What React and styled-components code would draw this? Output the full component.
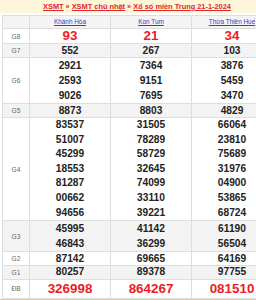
import styled, {createGlobalStyle} from "styled-components"

const GlobalStyle = createGlobalStyle`
	body {
		margin: 0;
		background: #fff;
		font-family: "Liberation Sans", Arial, sans-serif;
		overflow: hidden;
	}
`

const Viewport = styled.div`
	width: 100%;
	overflow: hidden;
`
const Page = styled.div`
	width: 274px;
`
const Breadcrumb = styled.div`
	height: 13px;
	background: #fdf6d8;
	text-align: center;
	font-size: 7.4px;
	font-weight: 700;
	line-height: 13px;
	color: #e3262d;
	white-space: nowrap;
`
const Crumb = styled.a`
	color: #e3262d;
	text-decoration: underline;
`
const Sep = styled.span`
	margin: 0 2px;
	color: #e3262d;
`
const Table = styled.table`
	width: 270px;
	margin: 2px 2px 0;
	border-collapse: collapse;
	table-layout: fixed;
	border: 1px solid #dedede;
`
const HeadRow = styled.tr`
	background: #f4f4f4;
`
const Province = styled.th`
	padding: 0;
	border: 1px solid #dedede;
	font-size: 6.4px;
	font-weight: 400;
	line-height: 12px;
	text-align: center;
`
const ProvinceLink = styled.a`
	color: #2f43c8;
	text-decoration: underline;
`
const Row = styled.tr`
	background: ${p => (p.$shade ? "#f3f3f3" : "#fff")};
`
const Label = styled.td`
	padding: 0;
	border: 1px solid #dedede;
	font-size: 6.6px;
	color: #666;
	text-align: center;
	vertical-align: middle;
`
const Cell = styled.td`
	padding: 0;
	border: 1px solid #dedede;
	text-align: center;
	vertical-align: middle;
`
const Num = styled.div`
	font-weight: 700;
	font-size: ${p => (p.$big ? "13.4px" : "10.2px")};
	line-height: ${p => p.$lh}px;
	color: ${p => (p.$big ? "#ec1c24" : "#222")};
`
const BottomLine = styled.div`
	height: 1px;
	border-top: 1px solid #f1c793;
	background: #fdf6d8;
`

const provinces = ["Khánh Hòa", "Kon Tum", "Thừa Thiên Huế"]

const prizes = [
	{name: "G8", lh: 14, big: true, values: [["93"], ["21"], ["34"]]},
	{name: "G7", lh: 13, values: [["552"], ["267"], ["103"]]},
	{
		name: "G6",
		lh: 15,
		values: [
			["2921", "2593", "9026"],
			["7364", "9151", "7695"],
			["3876", "5459", "3470"],
		],
	},
	{name: "G5", lh: 13, values: [["8873"], ["8803"], ["4829"]]},
	{
		name: "G4",
		lh: 14.6,
		values: [
			["83537", "51007", "45299", "18553", "81287", "00662", "94656"],
			["31505", "78289", "58729", "32645", "74099", "33110", "39221"],
			["66064", "23810", "75689", "31976", "04900", "53865", "68724"],
		],
	},
	{
		name: "G3",
		lh: 15,
		values: [
			["45995", "46843"],
			["41142", "36299"],
			["61190", "56504"],
		],
	},
	{name: "G2", lh: 13, values: [["87142"], ["69665"], ["64169"]]},
	{name: "G1", lh: 12.6, values: [["80257"], ["89378"], ["97755"]]},
	{name: "ĐB", lh: 18, big: true, values: [["326998"], ["864267"], ["081510"]]},
]

export default function App() {
	return (
		<Viewport>
			<GlobalStyle />
			<Page>
				<Breadcrumb>
					<Crumb>XSMT</Crumb>
					<Sep>»</Sep>
					<Crumb>XSMT chủ nhật</Crumb>
					<Sep>»</Sep>
					<Crumb>Xổ số miền Trung 21-1-2024</Crumb>
				</Breadcrumb>
				<Table>
					<colgroup>
						<col style={{width: 27}} />
						<col style={{width: 81}} />
						<col style={{width: 81}} />
						<col style={{width: 81}} />
					</colgroup>
					<thead>
						<HeadRow>
							<Province />
							{provinces.map(name => (
								<Province key={name}>
									<ProvinceLink>{name}</ProvinceLink>
								</Province>
							))}
						</HeadRow>
					</thead>
					<tbody>
						{prizes.map((prize, i) => (
							<Row key={prize.name} $shade={i % 2 === 1}>
								<Label>{prize.name}</Label>
								{prize.values.map((list, j) => (
									<Cell key={j}>
										{list.map(n => (
											<Num key={n} $big={prize.big} $lh={prize.lh}>
												{n}
											</Num>
										))}
									</Cell>
								))}
							</Row>
						))}
					</tbody>
				</Table>
				<BottomLine />
			</Page>
		</Viewport>
	)
}
